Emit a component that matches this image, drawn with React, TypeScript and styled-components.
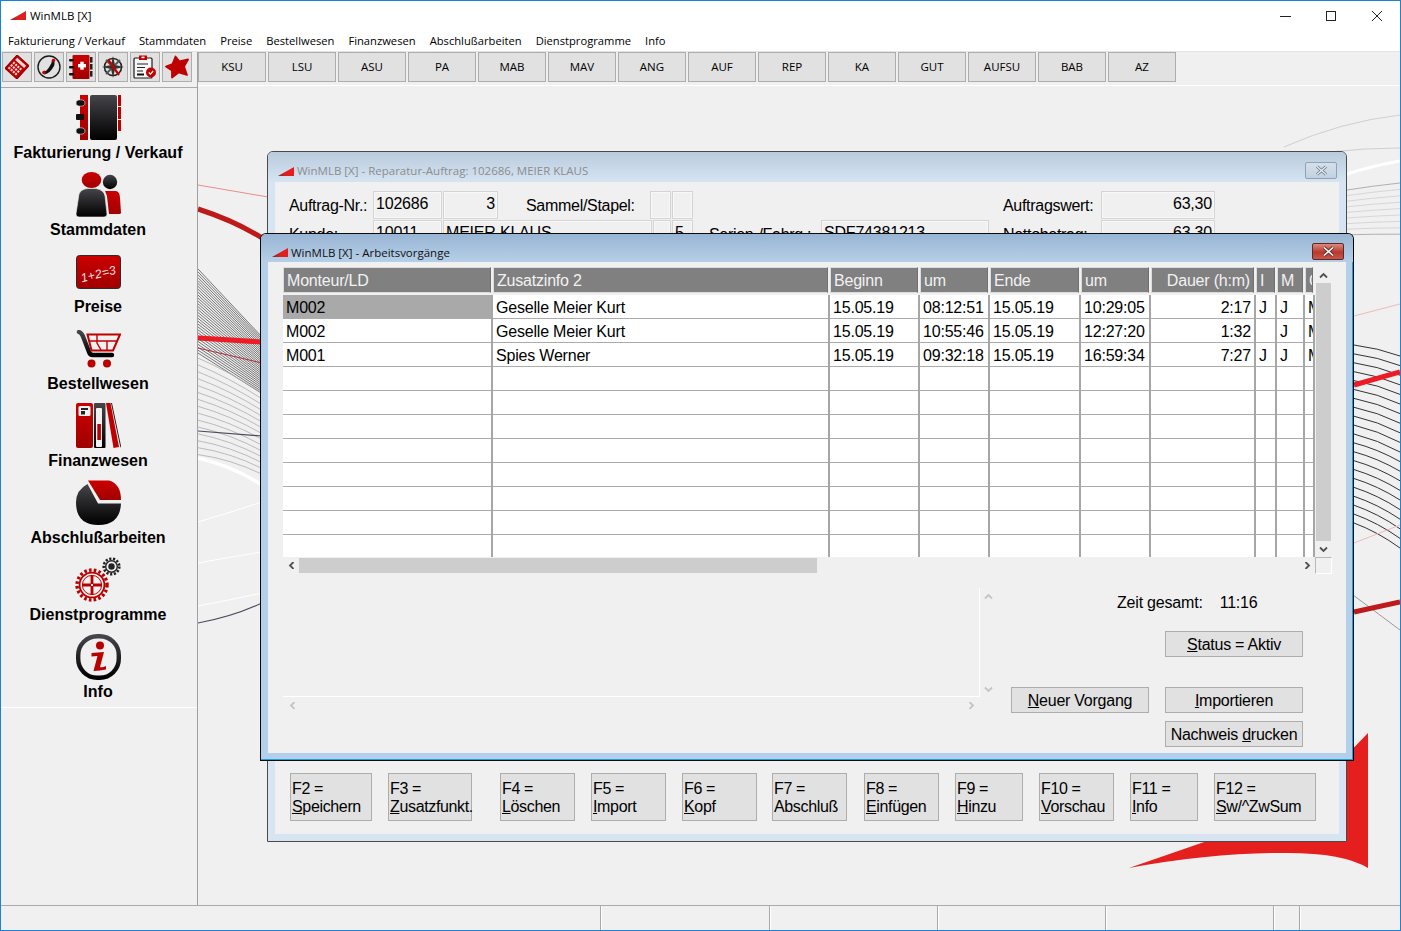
import * as React from "react";
import styled, { createGlobalStyle } from "styled-components";

const GlobalStyle = createGlobalStyle`
  html, body {
    margin: 0;
    padding: 0;
    background: #f0f0f0;
  }
  body {
    font-family: "Liberation Sans", Arial, sans-serif;
    color: #000;
  }
`;

const UI_FONT = `"Open Sans", "Noto Sans", sans-serif`;

const Frame = styled.div`
  width: 1401px;
  height: 931px;
  box-sizing: border-box;
  border: 1px solid #1883d7;
  display: flex;
  flex-direction: column;
  overflow: hidden;
  background: #f0f0f0;
`;

const TitleBar = styled.div`
  height: 29px;
  flex: none;
  display: flex;
  align-items: center;
  background: #fff;
  font: 11.5px ${UI_FONT};
  padding-left: 9px;
`;

const TitleText = styled.span`
  margin-left: 4px;
  flex: 1;
`;

const CaptionButton = styled.div`
  width: 46px;
  height: 29px;
  display: flex;
  align-items: center;
  justify-content: center;
`;

const MenuBar = styled.div`
  height: 22px;
  flex: none;
  box-sizing: border-box;
  display: flex;
  align-items: center;
  gap: 14px;
  padding-left: 7px;
  background: #fff;
  border-bottom: 1px solid #e4e4e4;
  font: 11.2px ${UI_FONT};
`;

const Workspace = styled.div`
  flex: 1;
  display: flex;
  min-height: 0;
`;

const Sidebar = styled.div`
  width: 196px;
  flex: none;
  border-right: 1px solid #a0a0a0;
`;

const ToolRow = styled.div`
  height: 36px;
  box-sizing: border-box;
  display: flex;
  gap: 2px;
  padding-left: 1px;
  border-bottom: 1px solid #a9a9a9;
`;

const ToolButton = styled.div`
  width: 30px;
  height: 30px;
  box-sizing: border-box;
  background: #e1e1e1;
  border: 1px solid #adadad;
  display: flex;
  align-items: center;
  justify-content: center;
`;

const SideNav = styled.div`
  height: 620px;
  box-sizing: border-box;
  padding: 7px 2px 0 0;
  border-bottom: 1px solid #fff;
  display: flex;
  flex-direction: column;
  gap: 10px;
`;

const NavItem = styled.div`
  display: flex;
  flex-direction: column;
  align-items: center;
  height: 67px;
`;

const NavIcon = styled.div`
  height: 45px;
  display: flex;
  align-items: center;
`;

const NavLabel = styled.div`
  margin-top: 4px;
  font-size: 16px;
  line-height: 18px;
  font-weight: 700;
  white-space: nowrap;
`;

const Main = styled.div`
  flex: 1;
  display: flex;
  flex-direction: column;
  min-width: 0;
`;

const ModuleBar = styled.div`
  height: 34px;
  flex: none;
  box-sizing: border-box;
  display: flex;
  gap: 2px;
  border-bottom: 1px solid #fff;
`;

const ModuleButton = styled.div`
  width: 68px;
  height: 30px;
  box-sizing: border-box;
  padding-bottom: 2px;
  background: #e1e1e1;
  border: 1px solid #adadad;
  display: flex;
  align-items: center;
  justify-content: center;
  font: 11.5px ${UI_FONT};
`;

const Canvas = styled.div`
  flex: 1;
  position: relative;
  overflow: hidden;
`;

const Art = styled.svg`
  position: absolute;
  left: 0;
  top: 0;
  width: 1202px;
  height: 820px;
`;

const WindowBase = styled.div`
  position: absolute;
  box-sizing: border-box;
  display: flex;
  flex-direction: column;
  border-radius: 6px 6px 0 0;
  letter-spacing: -0.2px;
`;

const BackWindow = styled(WindowBase)`
  left: 69px;
  top: 65px;
  width: 1080px;
  height: 691px;
  border: 1px solid #4a4a4a;
  background: #d7e4f2;
`;

const FrontWindow = styled(WindowBase)`
  left: 62px;
  top: 147px;
  width: 1094px;
  height: 528px;
  border: 1px solid #0c0c0c;
  border-right-color: #000;
  background: #b3cfe9;
  box-shadow: inset -1px 0 0 #1aa0e0, inset 0 -1px 0 #1aa0e0;
`;

const WindowHead = styled.div<{ $active?: boolean }>`
  height: ${(p) => (p.$active ? 28 : 30)}px;
  flex: none;
  display: flex;
  align-items: flex-start;
  padding: 0 8px 0 ${(p) => (p.$active ? 11 : 10)}px;
  border-radius: 5px 5px 0 0;
  background: linear-gradient(
    ${(p) => (p.$active ? "#98b5d3, #b6cfe8" : "#b9cbdd, #d6e4f2")}
  );
  color: ${(p) => (p.$active ? "#111" : "#8c8c8c")};
  font: 11.5px/16px ${UI_FONT};
  letter-spacing: 0;
`;

const HeadMark = styled.div<{ $active?: boolean }>`
  margin-top: ${(p) => (p.$active ? 14 : 15)}px;
  line-height: 0;
`;

const WindowTitle = styled.span`
  margin: 11px 0 0 3px;
  flex: 1;
`;

const CloseBox = styled.div<{ $active?: boolean }>`
  width: 32px;
  height: 17px;
  box-sizing: border-box;
  border-radius: 2px;
  display: flex;
  align-items: center;
  justify-content: center;
  border: 1px solid ${(p) => (p.$active ? "#5c2a26" : "#8fa3b8")};
  background: ${(p) =>
    p.$active ? "linear-gradient(#dc8a80, #b8392c 55%, #c8574a)" : "linear-gradient(#d6e0ea, #c3d1df)"};
  margin: ${(p) => (p.$active ? 9 : 10)}px 1px 0 0;
`;

const BackBody = styled.div`
  flex: 1;
  margin: 0 7px 7px;
  background: #f0f0f0;
  display: flex;
  flex-direction: column;
  justify-content: space-between;
  min-height: 0;
  padding: 9px 0 13px 14px;
`;

const FormBlock = styled.div`
  display: flex;
  flex-direction: column;
  gap: 1px;
`;

const FormRow = styled.div`
  display: flex;
  height: 28px;
`;

const FormLabel = styled.div<{ $w: number }>`
  width: ${(p) => p.$w}px;
  flex: none;
  font-size: 16px;
  line-height: 30px;
  white-space: nowrap;
  letter-spacing: -0.3px;
`;

const Field = styled.div<{ $w: number; $right?: boolean }>`
  width: ${(p) => p.$w}px;
  flex: none;
  box-sizing: border-box;
  margin-right: 1px;
  border: 1px solid #d4d4d4;
  box-shadow: inset 0 0 0 1px #f8f8f8;
  font-size: 16px;
  line-height: 23px;
  padding: 0 2px;
  white-space: nowrap;
  overflow: hidden;
  text-align: ${(p) => (p.$right ? "right" : "left")};
`;

const Gap = styled.div<{ $w: number }>`
  width: ${(p) => p.$w}px;
  flex: none;
`;

const FKeyRow = styled.div`
  display: flex;
  padding-left: 1px;
`;

const FKey = styled.div<{ $w: number; $after: number }>`
  width: ${(p) => p.$w}px;
  height: 48px;
  flex: none;
  box-sizing: border-box;
  margin-right: ${(p) => p.$after}px;
  padding: 6px 0 0 1px;
  background: #e1e1e1;
  border: 1px solid #adadad;
  font-size: 16px;
  line-height: 18px;
  letter-spacing: -0.35px;
  white-space: nowrap;
`;

const FrontBody = styled.div`
  flex: 1;
  margin: 0 7px 7px;
  background: #f0f0f0;
  padding: 5px 0 0 15px;
  display: flex;
  flex-direction: column;
  min-height: 0;
`;

const TableArea = styled.div`
  display: grid;
  grid-template-columns: 1032px 17px;
  grid-template-rows: 290px 17px;
  width: 1049px;
`;

const TableClip = styled.div`
  overflow: hidden;
  background: #fff;
`;

const columns = "210px 337px 90px 70px 91px 70px 105px 21px 28px 10px";

const HeaderRow = styled.div`
  display: grid;
  grid-template-columns: ${columns};
  height: 28px;
  background: #f0f0f0;
  box-sizing: border-box;
  padding-bottom: 2px;
`;

const HeaderCell = styled.div<{ $right?: boolean }>`
  box-sizing: border-box;
  margin-right: 2px;
  background: #808080;
  border: 1px solid #dcdcdc;
  border-right-color: #707070;
  color: #f2f2f2;
  font-size: 16px;
  line-height: 25px;
  padding: 0 3px;
  white-space: nowrap;
  overflow: hidden;
  text-align: ${(p) => (p.$right ? "right" : "left")};
`;

const BodyRow = styled.div`
  display: grid;
  grid-template-columns: ${columns};
  height: 24px;
`;

const BodyCell = styled.div<{ $right?: boolean; $selected?: boolean }>`
  box-sizing: border-box;
  border-right: 2px solid #a6a6a6;
  box-shadow: inset 0 -1px 0 #ababab;
  background: ${(p) => (p.$selected ? "#a9a9a9" : "#fff")};
  font-size: 16px;
  line-height: 25px;
  padding: 0 3px;
  white-space: nowrap;
  overflow: hidden;
  text-align: ${(p) => (p.$right ? "right" : "left")};
`;

const VScroll = styled.div`
  display: flex;
  flex-direction: column;
  align-items: center;
  background: #f0f0f0;
  width: 16px;
`;

const ArrowCell = styled.div`
  height: 16px;
  flex: none;
  display: flex;
  align-items: center;
  justify-content: center;
`;

const VThumb = styled.div`
  width: 15px;
  height: 258px;
  background: #cdcdcd;
`;

const HScroll = styled.div`
  display: flex;
  align-items: center;
  height: 17px;
`;

const HArrow = styled.div`
  width: 16px;
  height: 17px;
  flex: none;
  display: flex;
  align-items: center;
  justify-content: center;
`;

const HThumb = styled.div`
  width: 518px;
  height: 15px;
  background: #cdcdcd;
  margin-right: auto;
`;

const CornerBox = styled.div`
  box-sizing: border-box;
  border: 1px solid #fff;
  border-left-color: #b8b8b8;
  border-top-color: #b8b8b8;
`;

const LowerArea = styled.div`
  display: flex;
  margin-top: 14px;
`;

const MemoColumn = styled.div`
  width: 728px;
  flex: none;
  display: grid;
  grid-template-columns: 697px 16px;
  grid-template-rows: 109px 16px;
`;

const MemoBox = styled.div`
  box-sizing: border-box;
  border-right: 1px solid #fff;
  border-bottom: 1px solid #fff;
`;

const MemoVScroll = styled.div`
  display: flex;
  flex-direction: column;
  justify-content: space-between;
`;

const MemoHScroll = styled.div`
  display: flex;
  justify-content: space-between;
  padding: 0 1px;
`;

const ActionColumn = styled.div`
  width: 292px;
  flex: none;
  display: flex;
  flex-direction: column;
`;

const TotalRow = styled.div`
  height: 29px;
  margin-left: 106px;
  display: flex;
  gap: 17px;
  font-size: 16px;
  line-height: 29px;
`;

const ActionRow = styled.div<{ $top: number }>`
  margin-top: ${(p) => p.$top}px;
  display: flex;
  justify-content: flex-end;
  gap: 16px;
`;

const ActionButton = styled.div`
  width: 138px;
  height: 26px;
  box-sizing: border-box;
  background: #e1e1e1;
  border: 1px solid #adadad;
  text-align: center;
  font-size: 16px;
  line-height: 25px;
  letter-spacing: -0.25px;
  white-space: nowrap;
`;

const StatusBar = styled.div`
  height: 24px;
  flex: none;
  display: flex;
  border-top: 1px solid #a9a9a9;
`;

const StatusCell = styled.div<{ $w: number }>`
  width: ${(p) => p.$w}px;
  flex: none;
  box-sizing: border-box;
  border-right: 1px solid #a9a9a9;
  box-shadow: 1px 0 0 #fff;
`;

const HiddenDefs = styled.svg`
  position: absolute;
  width: 0;
  height: 0;
`;

/* ---- drawings ---- */

const Wedge = () => (
  <svg width="16" height="10" viewBox="0 0 16 10">
    <polygon points="0,9 16,0 16,9" fill="url(#wedge)" />
  </svg>
);

const Chevron = ({ dir, muted }: { dir: "up" | "down" | "left" | "right"; muted?: boolean }) => {
  const rot = { up: 0, right: 90, down: 180, left: 270 }[dir];
  return (
    <svg width="9" height="7" viewBox="0 0 9 7">
      <path
        d="M1 5.5 L4.5 2 L8 5.5"
        fill="none"
        stroke={muted ? "#c4c4c4" : "#505050"}
        strokeWidth="1.8"
        transform={`rotate(${rot} 4.5 3.5)`}
      />
    </svg>
  );
};

const BookIcon = () => (
  <svg width="45" height="45" viewBox="0 0 45 45">
    <rect x="4" y="0" width="8" height="45" fill="url(#red)" />
    <rect x="14" y="0" width="27" height="45" rx="2" fill="url(#dark)" />
    <rect x="42" y="0" width="3" height="11" fill="#c00000" />
    <rect x="42" y="12" width="3" height="12" fill="#c00000" />
    <rect x="42" y="25" width="3" height="11" fill="#c00000" />
    <ellipse cx="4.5" cy="8" rx="4.5" ry="3.2" fill="#111" stroke="#f0f0f0" strokeWidth=".6" />
    <rect x="0" y="19" width="8" height="6" rx="1" fill="#111" />
    <ellipse cx="4.5" cy="36" rx="4.5" ry="3.2" fill="#111" stroke="#f0f0f0" strokeWidth=".6" />
  </svg>
);

const PeopleIcon = () => (
  <svg width="45" height="46" viewBox="0 0 45 46">
    <path d="M29 19 L40 19 Q44 20 44 26 L45 41 Q45 42 43 42 L33 42 L31 24 Z" fill="url(#red)" />
    <circle cx="34" cy="10" r="7.2" fill="url(#dark)" />
    <ellipse cx="15.5" cy="8" rx="9.8" ry="8" fill="url(#red)" />
    <path
      d="M0 42 L3 22 Q5 17 12 16.5 L20 16.5 Q28 18 29 24 L31 42 Q31 45 28 45 L3 45 Q0 45 0 42 Z"
      fill="url(#dark)"
      stroke="#f0f0f0"
      strokeWidth=".6"
    />
  </svg>
);

const SlateIcon = () => (
  <svg width="45" height="34" viewBox="0 0 45 34">
    <rect x=".5" y=".5" width="44" height="33" rx="3" fill="url(#red)" stroke="#2b2b2b" />
    <text
      x="4"
      y="23"
      fontFamily="'Liberation Sans', sans-serif"
      fontStyle="italic"
      fontSize="12"
      letterSpacing=".4"
      fill="#f6e4e4"
      transform="rotate(-14 22 17)"
    >
      1+2=3
    </text>
  </svg>
);

const CartIcon = () => (
  <svg width="45" height="38" viewBox="0 0 45 38">
    <path d="M3 2 Q6 3 8 9 L13 22 Q14 25 17 25 L36 25" fill="none" stroke="url(#dark)" strokeWidth="4.4" strokeLinecap="round" />
    <path d="M11.5 4.5 L44 4.5 L37 20.5 L15.5 20.5 Z" fill="none" stroke="#c00000" strokeWidth="2" />
    <path d="M21 5 L21 13 L25 20 M13 11 L41 11 M31 11 L31 20" fill="none" stroke="#c00000" strokeWidth="1.4" />
    <circle cx="15.5" cy="33.5" r="4" fill="#b80000" />
    <circle cx="31" cy="33.5" r="4" fill="#b80000" />
  </svg>
);

const BindersIcon = () => (
  <svg width="45" height="45" viewBox="0 0 45 45">
    <rect x="0" y="0" width="17" height="45" rx="2" fill="url(#red)" />
    <rect x="2.5" y="3" width="12" height="10" rx="1.5" fill="#f0f0f0" />
    <rect x="5" y="5" width="7" height="2" fill="#222" />
    <rect x="5" y="8" width="4" height="3.5" fill="#222" />
    <rect x="18" y="0" width="11.5" height="45" rx="1" fill="url(#dark)" />
    <rect x="20" y="5" width="6" height="39" rx="1" fill="#f0f0f0" />
    <rect x="21.3" y="21" width="3.6" height="16" fill="#b80000" />
    <polygon points="30,0 34.5,0 43,44 37.5,45" fill="#c00000" />
    <polygon points="35,0 36,0 45,43 44.5,45" fill="#1b1b1b" />
  </svg>
);

const PieIcon = () => (
  <svg width="45" height="45" viewBox="0 0 45 45">
    <path d="M12 0.5 L33 0.5 Q45 4 45 20 L24 20 Z" fill="url(#red)" />
    <path d="M11.5 4 L22 23.5 L45 23.5 Q44 45 22.5 45 Q0 45 0 22.5 Q0 10 11.5 4 Z" fill="url(#dark)" />
  </svg>
);

const GearsIcon = () => (
  <svg width="46" height="46" viewBox="0 0 46 46">
    <circle cx="17" cy="28" r="15" fill="none" stroke="#b80000" strokeWidth="3.4" strokeDasharray="2.6 2.2" />
    <circle cx="17" cy="28" r="12.4" fill="#f0f0f0" stroke="#b80000" strokeWidth="1.8" />
    <circle cx="17" cy="28" r="9.6" fill="none" stroke="#c00000" strokeWidth="1" />
    <path d="M15.6 18.5 L18.4 18.5 L18.4 26.6 L26.5 26.6 L26.5 29.4 L18.4 29.4 L18.4 37.5 L15.6 37.5 L15.6 29.4 L7.5 29.4 L7.5 26.6 L15.6 26.6 Z" fill="#b80000" />
    <rect x="16" y="27" width="2" height="2" fill="#f0f0f0" />
    <circle cx="36.5" cy="9.5" r="7.8" fill="none" stroke="#222" strokeWidth="2.6" strokeDasharray="2.2 1.6" />
    <circle cx="36.5" cy="9.5" r="5.8" fill="#f0f0f0" stroke="#222" strokeWidth="1.4" />
    <circle cx="36.5" cy="9.5" r="3.2" fill="#222" />
  </svg>
);

const InfoIcon = () => (
  <svg width="45" height="46" viewBox="0 0 45 46">
    <rect x="2.2" y="2.2" width="40.6" height="41.6" rx="19" fill="none" stroke="url(#dark)" strokeWidth="4.4" />
    <circle cx="24" cy="11.5" r="4" fill="#b80000" />
    <path
      d="M15.5 19 L28 18 L24 33 Q26 34 30 32 L30 35.5 Q24 36.5 17.5 37 L21.5 22 L15.5 22.5 Z"
      fill="#b80000"
    />
  </svg>
);

const CalcTool = () => (
  <svg width="24" height="24" viewBox="0 0 24 24">
    <g transform="rotate(42 12 12)">
      <rect x="4" y="3" width="16" height="18" fill="#c00000" stroke="#8c0000" />
      <rect x="6" y="5" width="12" height="3" fill="#f3dada" />
      {[0, 1, 2, 3].map((c) =>
        [0, 1, 2].map((r) => <rect key={`${c}${r}`} x={6 + c * 3} y={10 + r * 3.4} width="2" height="2.2" fill="#f3dada" />)
      )}
    </g>
  </svg>
);

const PhoneTool = () => (
  <svg width="24" height="24" viewBox="0 0 24 24">
    <circle cx="12" cy="12" r="11" fill="none" stroke="#1a1a1a" strokeWidth="1.4" />
    <path d="M16 5 Q14 6 14.5 8 Q12 13 9 16 Q7 15 6 17 L7.5 19.5 Q13 18.5 17 11 Q18.5 7 16 5 Z" fill="#111" />
    <circle cx="16.5" cy="5.5" r="1.8" fill="#c00000" />
    <circle cx="7" cy="17.5" r="1.8" fill="#c00000" />
  </svg>
);

const CrossBookTool = () => (
  <svg width="24" height="24" viewBox="0 0 24 24">
    <rect x="3.5" y="0" width="17" height="24" rx="1" fill="url(#red)" />
    <rect x="9" y="9" width="8" height="3.4" fill="#fff" />
    <rect x="11.3" y="6.7" width="3.4" height="8" fill="#fff" />
    {[4, 11, 18].map((y) => (
      <rect key={y} x="0" y={y} width="5" height="2.6" rx="1" fill="#111" />
    ))}
    {[2, 9, 16].map((y) => (
      <rect key={y} x="21" y={y} width="2.5" height="5.6" fill="#222" />
    ))}
  </svg>
);

const CompassTool = () => (
  <svg width="24" height="24" viewBox="0 0 24 24">
    <circle cx="12" cy="12" r="8.5" fill="none" stroke="#222" strokeWidth="1.6" />
    <path d="M12 1 L14 10 L23 12 L14 14 L12 23 L10 14 L1 12 L10 10 Z" fill="#333" />
    <path d="M5 5 L10 10 M19 5 L14 10 M5 19 L10 14" stroke="#555" strokeWidth="1.8" />
    <path d="M7 4.5 L18 20" stroke="#c00000" strokeWidth="2.2" />
  </svg>
);

const ClipboardTool = () => (
  <svg width="24" height="24" viewBox="0 0 24 24">
    <rect x="1" y="3" width="18" height="20" rx="1" fill="#f7f7f7" stroke="#1c1c1c" strokeWidth="1.2" />
    <rect x="6" y="0.5" width="8" height="4.5" fill="#c00000" />
    <rect x="8.5" y="1.6" width="3" height="1.6" fill="#fff" />
    <path d="M4 9 H15 M4 12.5 H12 M4 16 H10" stroke="#222" strokeWidth="1.2" />
    <rect x="4" y="18.5" width="7" height="2" fill="#111" />
    <circle cx="18" cy="17.5" r="5" fill="#c00000" />
    <path d="M15.8 17.5 L17.4 19.2 L20.2 16" fill="none" stroke="#fff" strokeWidth="1.2" />
  </svg>
);

const StarTool = () => (
  <svg width="24" height="24" viewBox="0 0 24 24">
    <path
      d="M10.5 1.5 L14.5 6.5 L23 4.5 L19 11.5 L22 20 L13.5 17.5 L7 22.5 L7 15.5 L1 11.5 L7.5 9 Z"
      fill="#bf0000"
      stroke="#bf0000"
      strokeWidth="1.8"
      strokeLinejoin="round"
    />
  </svg>
);

const range = (n: number) => Array.from({ length: n }, (_, i) => i);

/* background lines, in page coordinates */
const BackgroundArt = () => (
  <Art viewBox="198 86 1202 820">
    <path d="M198 185 L268 197" stroke="#ee8a8a" strokeWidth="1" fill="none" />
    <path d="M198 209 Q235 221 262 238" stroke="#bf1a1a" strokeWidth="5" fill="none" />
    {range(30).map((i) => (
      <line key={i} x1={198} y1={269 + i * 2.9} x2={262} y2={337 + i * 1.95} stroke="#555" strokeWidth=".8" />
    ))}
    {range(15).map((i) => (
      <path
        key={i}
        d={`M198 ${358 + i * 6.9} Q230 ${372 + i * 6.2} 262 ${393 + i * 5.8}`}
        stroke="#b4b4b4"
        strokeWidth=".9"
        fill="none"
      />
    ))}
    <path d="M198 338 L262 342" stroke="#ed1c24" strokeWidth="5" fill="none" />
    <path d="M198 348 L262 363" stroke="#b03040" strokeWidth="1" fill="none" />
    <path d="M198 431 L262 436" stroke="#4a4a60" strokeWidth="1.2" fill="none" />
    <path d="M198 458 Q232 466 262 485" stroke="#fff" strokeWidth="3.5" fill="none" />
    <path d="M198 522 Q232 512 262 502" stroke="#fff" strokeWidth="1" fill="none" />
    <path d="M198 563 Q230 557 262 552" stroke="#fff" strokeWidth="1" fill="none" />
    <path d="M198 606 Q230 600 262 593" stroke="#fff" strokeWidth="1" fill="none" />
    <path d="M198 623 Q232 617 262 603" stroke="#4a4a60" strokeWidth="1.2" fill="none" />

    <path d="M1284 147 Q1340 122 1400 115" stroke="#cfcfcf" strokeWidth="1" fill="none" />
    <path d="M1330 152 Q1365 148 1400 148" stroke="#cfcfcf" strokeWidth="1" fill="none" />
    <path d="M1347 174 Q1372 166 1400 161" stroke="#fff" strokeWidth="3" fill="none" />
    {range(9).map((i) => (
      <path
        key={i}
        d={`M1347 ${190 + i * 5.6} Q1372 ${186 + i * 6} 1400 ${183 + i * 6.4}`}
        stroke={i === 0 || i === 8 ? "#a8a8a8" : "#d2d2d2"}
        strokeWidth=".9"
        fill="none"
      />
    ))}
    <path d="M1354 316 L1400 304" stroke="#f0b8b8" strokeWidth="1" fill="none" />
    {range(21).map((i) => (
      <path
        key={i}
        d={`M1354 ${345 + i * 8.9} Q1378 ${348 + i * 9.2} 1400 ${356 + i * 9.6}`}
        stroke="#333"
        strokeWidth="1"
        fill="none"
      />
    ))}
    <path d="M1354 385 L1400 372" stroke="#ed1c24" strokeWidth="5" fill="none" />
    <path d="M1354 543 L1400 525" stroke="#f0b8b8" strokeWidth="1" fill="none" />
    <path d="M1353 595 L1400 630" stroke="#9a9a9a" strokeWidth="1" fill="none" />
    <path d="M1354 612 L1400 602" stroke="#bf1a1a" strokeWidth="5" fill="none" />
    <path
      d="M1129 868 L1210 840 L1340 762 L1368 733 L1368 868 Q1342 852 1280 853 Q1210 853 1129 868 Z"
      fill="#e51e1e"
    />
  </Art>
);

/* ---- data ---- */

const menus = [
  "Fakturierung / Verkauf",
  "Stammdaten",
  "Preise",
  "Bestellwesen",
  "Finanzwesen",
  "Abschlußarbeiten",
  "Dienstprogramme",
  "Info",
];

const modules = ["KSU", "LSU", "ASU", "PA", "MAB", "MAV", "ANG", "AUF", "REP", "KA", "GUT", "AUFSU", "BAB", "AZ"];

const navItems = [
  { label: "Fakturierung / Verkauf", icon: <BookIcon /> },
  { label: "Stammdaten", icon: <PeopleIcon /> },
  { label: "Preise", icon: <SlateIcon /> },
  { label: "Bestellwesen", icon: <CartIcon /> },
  { label: "Finanzwesen", icon: <BindersIcon /> },
  { label: "Abschlußarbeiten", icon: <PieIcon /> },
  { label: "Dienstprogramme", icon: <GearsIcon /> },
  { label: "Info", icon: <InfoIcon /> },
];

const fKeys = [
  { top: "F2 =", hot: "S", rest: "peichern", w: 82, after: 16 },
  { top: "F3 =", hot: "Z", rest: "usatzfunkt.", w: 84, after: 28 },
  { top: "F4 =", hot: "L", rest: "öschen", w: 75, after: 16 },
  { top: "F5 =", hot: "I", rest: "mport", w: 75, after: 16 },
  { top: "F6 =", hot: "K", rest: "opf", w: 75, after: 15 },
  { top: "F7 =", hot: "", rest: "Abschluß", w: 75, after: 17 },
  { top: "F8 =", hot: "E", rest: "infügen", w: 75, after: 16 },
  { top: "F9 =", hot: "H", rest: "inzu", w: 68, after: 16 },
  { top: "F10 =", hot: "V", rest: "orschau", w: 75, after: 16 },
  { top: "F11 =", hot: "I", rest: "nfo", w: 68, after: 16 },
  { top: "F12 =", hot: "S", rest: "w/^ZwSum", w: 102, after: 0 },
];

const headers = ["Monteur/LD", "Zusatzinfo 2", "Beginn", "um", "Ende", "um", "Dauer (h:m)", "I", "M", "O"];

const rows = [
  ["M002", "Geselle Meier Kurt", "15.05.19", "08:12:51", "15.05.19", "10:29:05", "2:17", "J", "J", "M"],
  ["M002", "Geselle Meier Kurt", "15.05.19", "10:55:46", "15.05.19", "12:27:20", "1:32", "", "J", "M"],
  ["M001", "Spies Werner", "15.05.19", "09:32:18", "15.05.19", "16:59:34", "7:27", "J", "J", "M"],
  ...range(8).map(() => ["", "", "", "", "", "", "", "", "", ""]),
];

const statusCells = [600, 169, 168, 168, 168, 26];

const App = () => {
  return (
    <>
      <GlobalStyle />
      <HiddenDefs>
        <defs>
          <linearGradient id="dark" x1="0" y1="0" x2="0" y2="1">
            <stop offset="0" stopColor="#45454a" />
            <stop offset="1" stopColor="#000" />
          </linearGradient>
          <linearGradient id="red" x1="0" y1="0" x2="0" y2="1">
            <stop offset="0" stopColor="#cc0000" />
            <stop offset="1" stopColor="#a00000" />
          </linearGradient>
          <linearGradient id="wedge" x1="0" y1="0" x2="1" y2="0">
            <stop offset="0" stopColor="#7a2a2a" />
            <stop offset=".5" stopColor="#e01e1e" />
            <stop offset="1" stopColor="#e81c1c" />
          </linearGradient>
        </defs>
      </HiddenDefs>
      <Frame>
        <TitleBar>
          <Wedge />
          <TitleText>WinMLB [X]</TitleText>
          <CaptionButton>
            <svg width="12" height="12" viewBox="0 0 12 12">
              <path d="M1 6.5 H12" stroke="#222" strokeWidth="1" />
            </svg>
          </CaptionButton>
          <CaptionButton>
            <svg width="12" height="12" viewBox="0 0 12 12">
              <rect x="1.5" y="1.5" width="9" height="9" fill="none" stroke="#222" strokeWidth="1" />
            </svg>
          </CaptionButton>
          <CaptionButton>
            <svg width="12" height="12" viewBox="0 0 12 12">
              <path d="M1 1 L11 11 M11 1 L1 11" stroke="#222" strokeWidth="1" />
            </svg>
          </CaptionButton>
        </TitleBar>
        <MenuBar>
          {menus.map((m) => (
            <span key={m}>{m}</span>
          ))}
        </MenuBar>
        <Workspace>
          <Sidebar>
            <ToolRow>
              <ToolButton><CalcTool /></ToolButton>
              <ToolButton><PhoneTool /></ToolButton>
              <ToolButton><CrossBookTool /></ToolButton>
              <ToolButton><CompassTool /></ToolButton>
              <ToolButton><ClipboardTool /></ToolButton>
              <ToolButton><StarTool /></ToolButton>
            </ToolRow>
            <SideNav>
              {navItems.map((n) => (
                <NavItem key={n.label}>
                  <NavIcon>{n.icon}</NavIcon>
                  <NavLabel>{n.label}</NavLabel>
                </NavItem>
              ))}
            </SideNav>
          </Sidebar>
          <Main>
            <ModuleBar>
              {modules.map((m) => (
                <ModuleButton key={m}>{m}</ModuleButton>
              ))}
            </ModuleBar>
            <Canvas>
              <BackgroundArt />
              <BackWindow>
                <WindowHead>
                  <HeadMark><Wedge /></HeadMark>
                  <WindowTitle>WinMLB [X] - Reparatur-Auftrag: 102686, MEIER KLAUS</WindowTitle>
                  <CloseBox>
                    <svg width="13" height="11" viewBox="0 0 13 11">
                      <path d="M2 1.5 L11 9.5 M11 1.5 L2 9.5" stroke="#66788a" strokeWidth="3" />
                      <path d="M2 1.5 L11 9.5 M11 1.5 L2 9.5" stroke="#eef2f6" strokeWidth="1.2" />
                    </svg>
                  </CloseBox>
                </WindowHead>
                <BackBody>
                  <FormBlock>
                    <FormRow>
                      <FormLabel $w={84}>Auftrag-Nr.:</FormLabel>
                      <Field $w={69}>102686</Field>
                      <Field $w={55} $right>3</Field>
                      <Gap $w={27} />
                      <FormLabel $w={124}>Sammel/Stapel:</FormLabel>
                      <Field $w={21} />
                      <Field $w={21} />
                      <Gap $w={309} />
                      <FormLabel $w={98}>Auftragswert:</FormLabel>
                      <Field $w={114} $right>63,30</Field>
                    </FormRow>
                    <FormRow>
                      <FormLabel $w={84}>Kunde:</FormLabel>
                      <Field $w={69}>10011</Field>
                      <Field $w={209}>MEIER KLAUS</Field>
                      <Field $w={18} />
                      <Field $w={21}>5</Field>
                      <Gap $w={15} />
                      <FormLabel $w={112}>Serien-/Fahrg.:</FormLabel>
                      <Field $w={168}>SDF74381213</Field>
                      <Gap $w={13} />
                      <FormLabel $w={98}>Nettobetrag:</FormLabel>
                      <Field $w={114} $right>63,30</Field>
                    </FormRow>
                  </FormBlock>
                  <FKeyRow>
                    {fKeys.map((k) => (
                      <FKey key={k.top} $w={k.w} $after={k.after}>
                        {k.top}
                        <br />
                        {k.hot && <u>{k.hot}</u>}
                        {k.rest}
                      </FKey>
                    ))}
                  </FKeyRow>
                </BackBody>
              </BackWindow>
              <FrontWindow>
                <WindowHead $active>
                  <HeadMark $active><Wedge /></HeadMark>
                  <WindowTitle>WinMLB [X] - Arbeitsvorgänge</WindowTitle>
                  <CloseBox $active>
                    <svg width="13" height="11" viewBox="0 0 13 11">
                      <path d="M2 1.5 L11 9.5 M11 1.5 L2 9.5" stroke="#5c2a26" strokeWidth="3.2" />
                      <path d="M2 1.5 L11 9.5 M11 1.5 L2 9.5" stroke="#fff" strokeWidth="1.6" />
                    </svg>
                  </CloseBox>
                </WindowHead>
                <FrontBody>
                  <TableArea>
                    <TableClip>
                      <HeaderRow>
                        {headers.map((h, i) => (
                          <HeaderCell key={i} $right={i === 6}>
                            {h}
                          </HeaderCell>
                        ))}
                      </HeaderRow>
                      {rows.map((row, r) => (
                        <BodyRow key={r}>
                          {row.map((c, i) => (
                            <BodyCell key={i} $right={i === 6} $selected={r === 0 && i === 0}>
                              {c}
                            </BodyCell>
                          ))}
                        </BodyRow>
                      ))}
                    </TableClip>
                    <VScroll>
                      <ArrowCell><Chevron dir="up" /></ArrowCell>
                      <VThumb />
                      <ArrowCell><Chevron dir="down" /></ArrowCell>
                    </VScroll>
                    <HScroll>
                      <HArrow><Chevron dir="left" /></HArrow>
                      <HThumb />
                      <HArrow><Chevron dir="right" /></HArrow>
                    </HScroll>
                    <CornerBox />
                  </TableArea>
                  <LowerArea>
                    <MemoColumn>
                      <MemoBox />
                      <MemoVScroll>
                        <ArrowCell><Chevron dir="up" muted /></ArrowCell>
                        <ArrowCell><Chevron dir="down" muted /></ArrowCell>
                      </MemoVScroll>
                      <MemoHScroll>
                        <HArrow><Chevron dir="left" muted /></HArrow>
                        <HArrow><Chevron dir="right" muted /></HArrow>
                      </MemoHScroll>
                    </MemoColumn>
                    <ActionColumn>
                      <TotalRow>
                        <span>Zeit gesamt:</span>
                        <span>11:16</span>
                      </TotalRow>
                      <ActionRow $top={14}>
                        <ActionButton><u>S</u>tatus = Aktiv</ActionButton>
                      </ActionRow>
                      <ActionRow $top={30}>
                        <ActionButton><u>N</u>euer Vorgang</ActionButton>
                        <ActionButton><u>I</u>mportieren</ActionButton>
                      </ActionRow>
                      <ActionRow $top={8}>
                        <ActionButton>Nachweis <u>d</u>rucken</ActionButton>
                      </ActionRow>
                    </ActionColumn>
                  </LowerArea>
                </FrontBody>
              </FrontWindow>
            </Canvas>
          </Main>
        </Workspace>
        <StatusBar>
          {statusCells.map((w, i) => (
            <StatusCell key={i} $w={w} />
          ))}
        </StatusBar>
      </Frame>
    </>
  );
};

export default App;
